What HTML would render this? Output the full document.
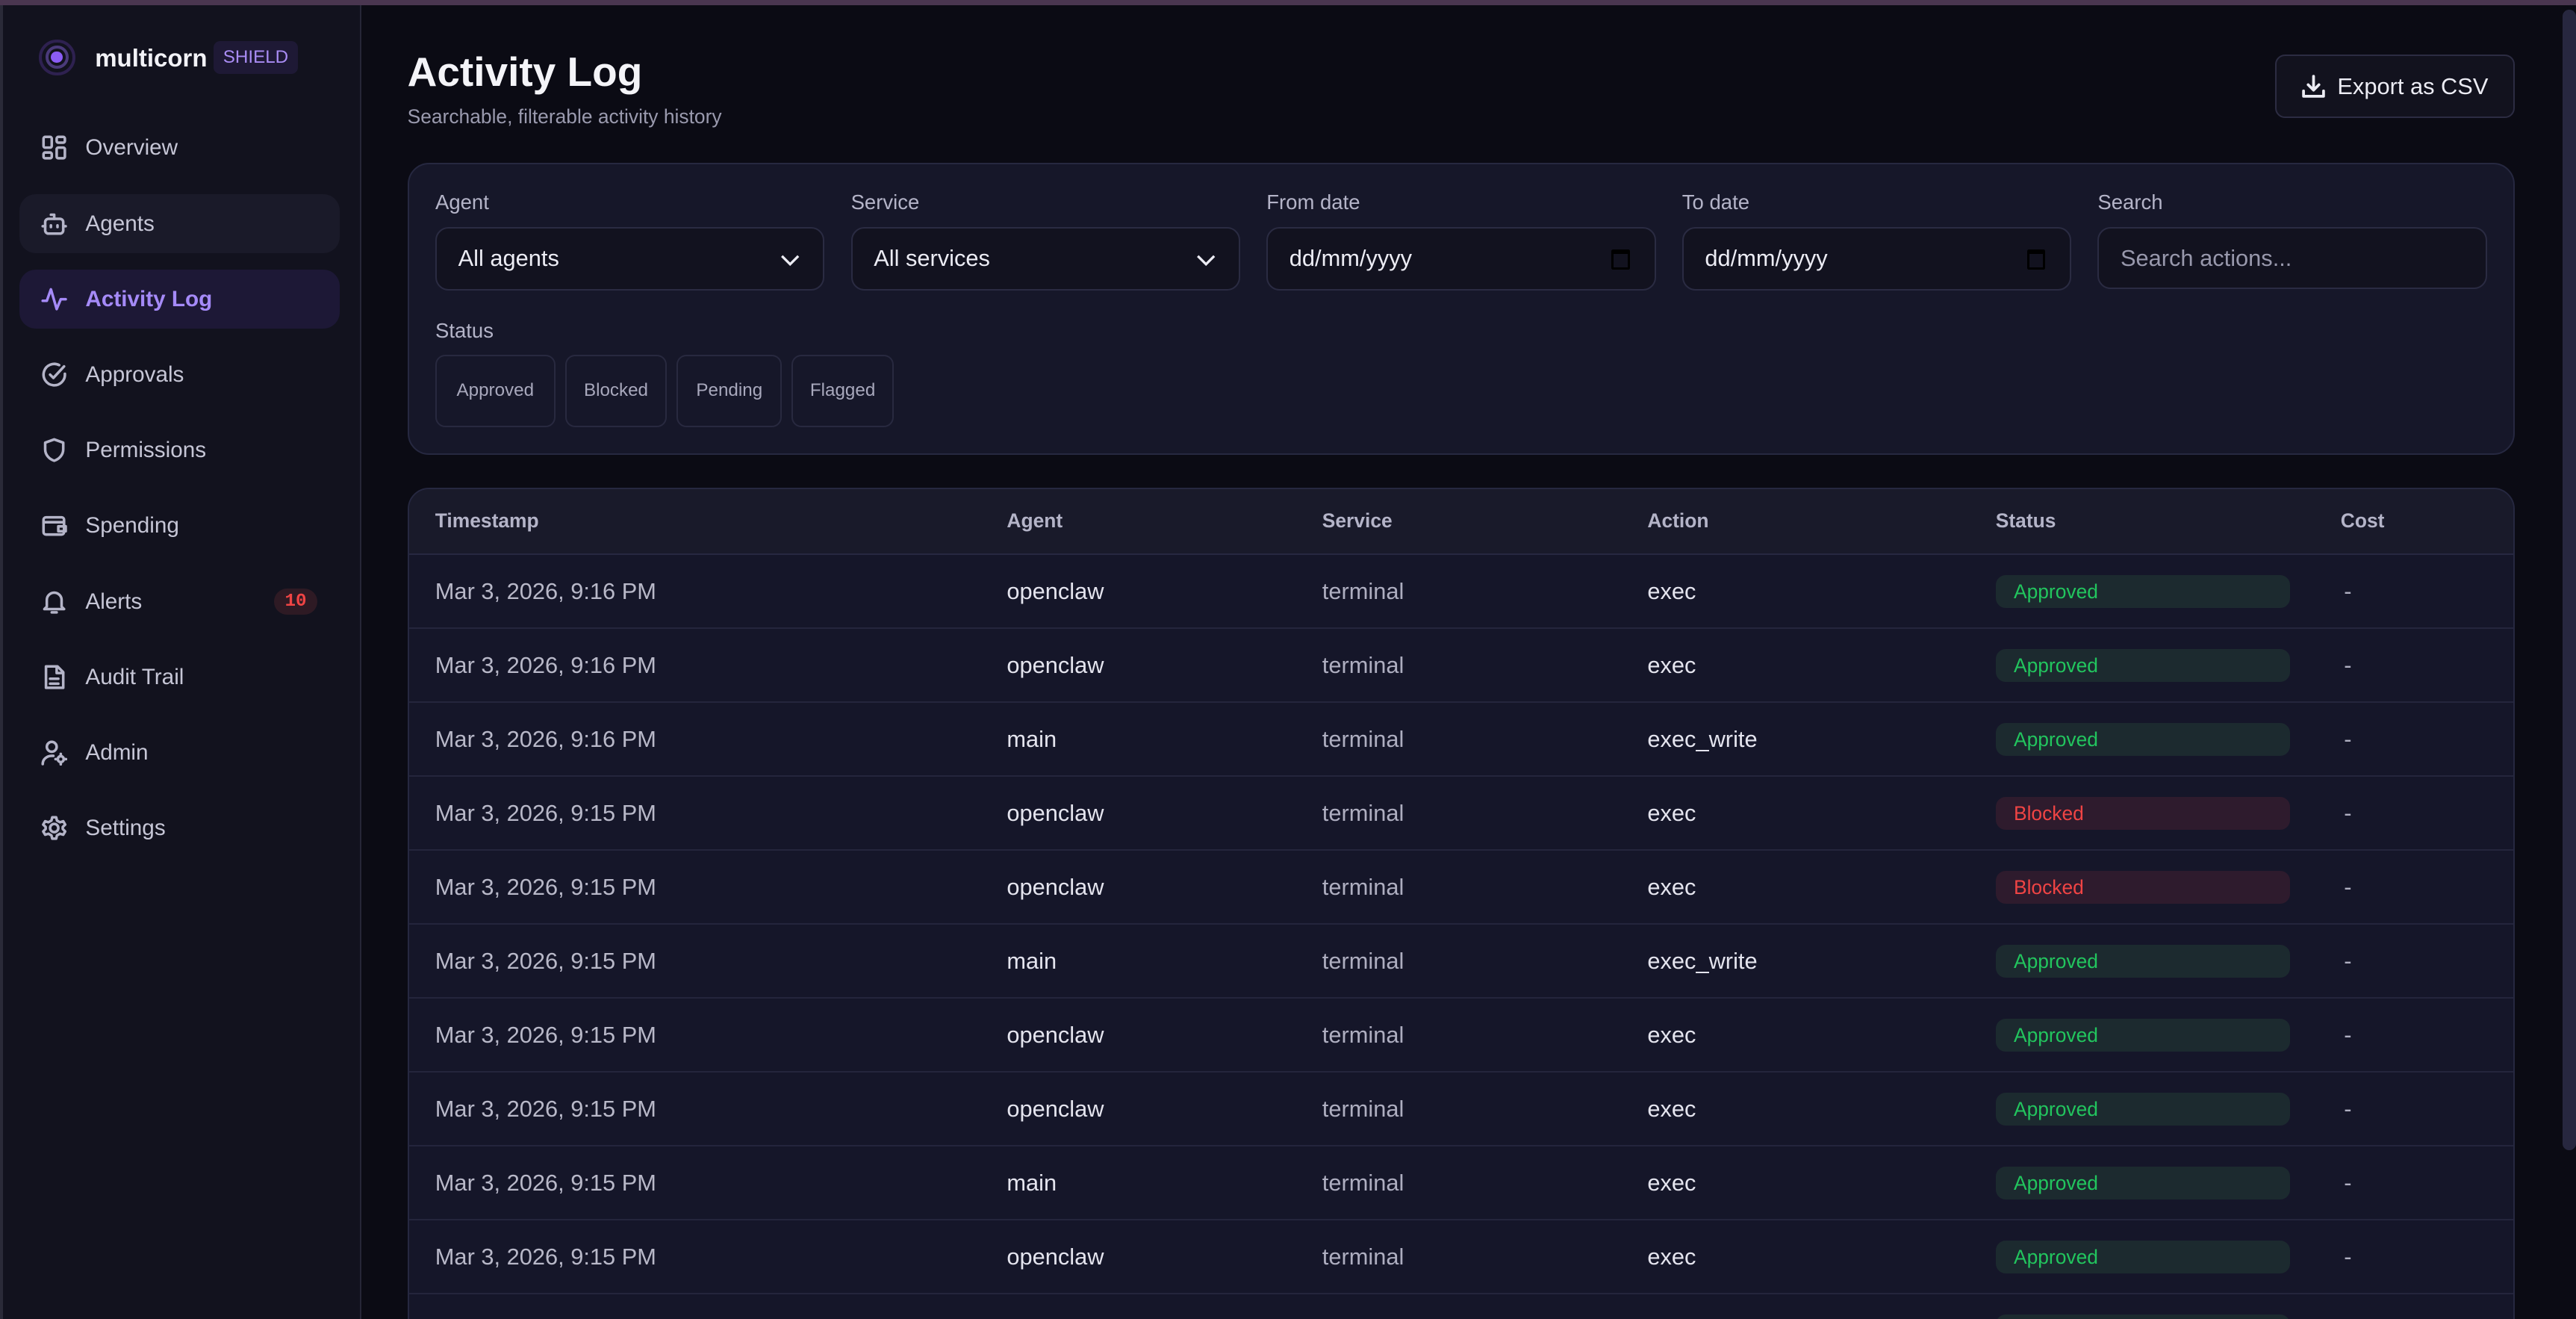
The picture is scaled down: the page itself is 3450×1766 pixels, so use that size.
<!DOCTYPE html>
<html><head><meta charset="utf-8"><style>
*{box-sizing:border-box;margin:0;padding:0}
html,body{width:3450px;height:1766px;overflow:hidden;background:#0b0b14}
#w{zoom:2.2;width:1568px;height:803px;position:relative;font-family:"Liberation Sans",sans-serif;background:#0b0b14;color:#e4e4ee;overflow:hidden}
.top{position:absolute;left:0;top:0;width:1568px;height:3px;background:#4a3650}
.side{position:absolute;left:0;top:3px;width:220px;height:800px;background:#12121e;border-right:1px solid #262637;border-left:2px solid #2a2a38}
.logo{position:absolute;left:22px;top:24px;width:22px;height:22px;border-radius:50%;border:2px solid #2e2150;background:#12121e}
.logo:before{content:"";position:absolute;left:2px;top:2px;width:14px;height:14px;border-radius:50%;border:2px solid #4a3a7a;box-sizing:border-box}
.logo:after{content:"";position:absolute;left:5.5px;top:5.5px;width:7px;height:7px;border-radius:50%;background:#8b5cf6}
.brand{position:absolute;left:56px;top:27px;font-size:15px;font-weight:bold;color:#f2f2f7}
.shield{position:absolute;left:128px;top:25px;height:20px;padding:0 6px;line-height:20px;font-size:11px;color:#a98cf4;background:#1e1935;border-radius:4px}
.nav{position:absolute;left:12px;width:195px;height:36px;border-radius:10px;font-size:13.5px;color:#c6c6d6;line-height:36px;padding-left:40px}
.nav svg{position:absolute;left:13px;top:10px;width:16px;height:16px;fill:none;stroke:#b4b4c8;stroke-width:1.6;stroke-linecap:round;stroke-linejoin:round}
.nav.ag{background:#1a1a29}
.nav.act{background:#1d1836;color:#a58af8;font-weight:bold}
.nav.act svg{stroke:#a58af8}
.badge{position:absolute;right:14px;top:10px;height:16px;width:26px;border-radius:8px;background:#2e1a24;color:#ef4444;font:bold 11px "Liberation Mono",monospace;line-height:16px;text-align:center}
h1{position:absolute;left:248px;top:29px;font-size:25px;font-weight:bold;color:#f4f4f8}
.sub{position:absolute;left:248px;top:64px;font-size:12px;color:#9a9aae}
.exp{position:absolute;left:1385px;top:33px;width:146px;height:39px;border:1px solid #2c2c42;border-radius:6px;background:#12121e;font-size:14px;color:#ececf4;line-height:37px;padding-left:37px}
.exp svg{position:absolute;left:15px;top:11px;width:15px;height:15px;fill:none;stroke:#ececf4;stroke-width:1.8;stroke-linecap:round;stroke-linejoin:round}
.card{position:absolute;left:248px;top:99px;width:1283px;height:178px;background:#161729;border:1px solid #262840;border-radius:13px}
.lbl{position:absolute;top:116px;font-size:12.5px;color:#b4b4c8}
.inp{position:absolute;top:138px;width:237px;height:39px;background:#12121f;border:1px solid #2a2b42;border-radius:8px;font-size:14px;color:#ececf4;line-height:36px;padding-left:13px}
.inp svg{position:absolute;right:14px;top:13px;width:12px;height:12px;fill:none;stroke:#ececf4;stroke-width:1.5}
.cal{position:absolute;right:15px;top:13px;width:11px;height:12px;border:1.5px solid #000;border-top-width:3px;border-radius:1px}
.chip{position:absolute;top:216px;height:44px;border:1px solid #28293f;border-radius:6px;font-size:11px;color:#a8a8bc;line-height:42px;text-align:center}
.tbl{position:absolute;left:248px;top:297px;width:1283px;height:520px;background:#151629;border:1px solid #262840;border-radius:13px;overflow:hidden}
.th{position:absolute;left:0;top:0;width:100%;height:40px;background:#191a2a;border-bottom:1px solid #272841}
.th span{position:absolute;top:12px;font-size:12px;font-weight:bold;color:#b4b4c8}
.row{position:absolute;left:0;width:100%;height:45px;border-bottom:1px solid #24253c}
.row span{position:absolute;top:14px;font-size:14px;color:#e4e4ee}
.row .ts{color:#b8b8c8}
.row .c{color:#aeaec0}
.st{position:absolute;left:966px;top:12px;width:179px;height:20px;border-radius:6px;font-size:12px;line-height:20px;padding-left:11px}
.ok{background:#1c2a2f;color:#22c55e}
.bl{background:#2e1b2d;color:#ef4444}
.sb{position:absolute;left:1558px;top:3px;width:10px;height:800px;background:#0b0b14}
.sb div{position:absolute;left:2px;top:3px;width:8px;height:694px;background:#27273f;border-radius:4px}
</style></head><body><div id="w">
<div class="top"></div>
<div class="side">
<div class="logo" style="top:21px"></div><div class="brand" style="top:24px">multicorn</div><div class="shield" style="top:22px">SHIELD</div>
</div>
<div class="nav" style="top:72px"><svg viewBox="0 0 16 16"><rect x="1.5" y="1.5" width="5" height="6.5" rx="1"/><rect x="9.5" y="1.5" width="5" height="3.5" rx="1"/><rect x="1.5" y="11" width="5" height="3.5" rx="1"/><rect x="9.5" y="8" width="5" height="6.5" rx="1"/></svg>Overview</div>
<div class="nav ag" style="top:118px"><svg viewBox="0 0 16 16"><rect x="2.5" y="5" width="11" height="9" rx="2"/><path d="M8 5V2.5H6M1 9.5h1.5M13.5 9.5H15M6 9v1M10 9v1"/></svg>Agents</div>
<div class="nav act" style="top:164px"><svg viewBox="0 0 16 16"><path d="M1 9h2.5L6 2l3.5 12L12 8h3"/></svg>Activity Log</div>
<div class="nav" style="top:210px"><svg viewBox="0 0 16 16"><path d="M14.5 7.5A6.5 6.5 0 1 1 11 2.2"/><path d="M5.5 8l2 2L14 3"/></svg>Approvals</div>
<div class="nav" style="top:256px"><svg viewBox="0 0 16 16"><path d="M8 1.5l5.5 2v4c0 3.5-2.5 6-5.5 7-3-1-5.5-3.5-5.5-7v-4z"/></svg>Permissions</div>
<div class="nav" style="top:302px"><svg viewBox="0 0 16 16"><rect x="1.5" y="3" width="12.5" height="10.5" rx="1.5"/><path d="M1.5 6h12.5M10.5 8.5h4.5v3h-4.5z"/></svg>Spending</div>
<div class="nav" style="top:348px"><svg viewBox="0 0 16 16"><path d="M3.5 11V7a4.5 4.5 0 0 1 9 0v4l1.5 1.5H2z"/><path d="M6.5 14.5h3"/></svg>Alerts<span class="badge">10</span></div>
<div class="nav" style="top:394px"><svg viewBox="0 0 16 16"><path d="M3 1.5h7l3.5 3.5v9.5H3z"/><path d="M9.5 1.5v4h4M5.5 9h5M5.5 12h5"/></svg>Audit Trail</div>
<div class="nav" style="top:440px"><svg viewBox="0 0 16 16"><circle cx="6.5" cy="4.5" r="3"/><path d="M1 15c0-3 2.5-5 5.5-5h1"/><circle cx="12" cy="12" r="1.8"/><path d="M12 8.8v1.4M12 13.8v1.4M8.8 12h1.4M13.8 12h1.4"/></svg>Admin</div>
<div class="nav" style="top:486px"><svg viewBox="0 0 16 16"><circle cx="8" cy="8" r="2.5"/><path d="M6.8 1.5h2.4l.5 2 1.8 1 2-.6 1.2 2-1.5 1.5v1.2l1.5 1.5-1.2 2-2-.6-1.8 1-.5 2H6.8l-.5-2-1.8-1-2 .6-1.2-2 1.5-1.5V7.4L1.3 5.9l1.2-2 2 .6 1.8-1z"/></svg>Settings</div>

<h1>Activity Log</h1>
<div class="sub">Searchable, filterable activity history</div>
<div class="exp"><svg viewBox="0 0 16 16"><path d="M8 1.5v9M4.5 7l3.5 3.5L11.5 7M1.5 11v3.5h13V11"/></svg>Export as CSV</div>

<div class="card"></div>
<div class="lbl" style="left:265px">Agent</div>
<div class="lbl" style="left:518px">Service</div>
<div class="lbl" style="left:771px">From date</div>
<div class="lbl" style="left:1024px">To date</div>
<div class="lbl" style="left:1277px">Search</div>
<div class="inp" style="left:265px">All agents<svg viewBox="0 0 12 12"><path d="M1 4l5 5 5-5"/></svg></div>
<div class="inp" style="left:518px">All services<svg viewBox="0 0 12 12"><path d="M1 4l5 5 5-5"/></svg></div>
<div class="inp" style="left:771px">dd/mm/yyyy<div class="cal"></div></div>
<div class="inp" style="left:1024px">dd/mm/yyyy<div class="cal"></div></div>
<div class="inp" style="left:1277px;top:138px;height:38px;color:#9898ac">Search actions...</div>
<div class="lbl" style="left:265px;top:194px">Status</div>
<div class="chip" style="left:265px;width:73px">Approved</div>
<div class="chip" style="left:344px;width:62px">Blocked</div>
<div class="chip" style="left:412px;width:64px">Pending</div>
<div class="chip" style="left:482px;width:62px">Flagged</div>

<div class="tbl">
<div class="th"><span style="left:16px">Timestamp</span><span style="left:364px">Agent</span><span style="left:556px">Service</span><span style="left:754px">Action</span><span style="left:966px">Status</span><span style="left:1176px">Cost</span></div>
<div class="row" style="top:40px"><span class="ts" style="left:16px">Mar 3, 2026, 9:16 PM</span><span style="left:364px">openclaw</span><span class="c" style="left:556px">terminal</span><span style="left:754px">exec</span><div class="st ok">Approved</div><span class="c" style="left:1178px">-</span></div>
<div class="row" style="top:85px"><span class="ts" style="left:16px">Mar 3, 2026, 9:16 PM</span><span style="left:364px">openclaw</span><span class="c" style="left:556px">terminal</span><span style="left:754px">exec</span><div class="st ok">Approved</div><span class="c" style="left:1178px">-</span></div>
<div class="row" style="top:130px"><span class="ts" style="left:16px">Mar 3, 2026, 9:16 PM</span><span style="left:364px">main</span><span class="c" style="left:556px">terminal</span><span style="left:754px">exec_write</span><div class="st ok">Approved</div><span class="c" style="left:1178px">-</span></div>
<div class="row" style="top:175px"><span class="ts" style="left:16px">Mar 3, 2026, 9:15 PM</span><span style="left:364px">openclaw</span><span class="c" style="left:556px">terminal</span><span style="left:754px">exec</span><div class="st bl">Blocked</div><span class="c" style="left:1178px">-</span></div>
<div class="row" style="top:220px"><span class="ts" style="left:16px">Mar 3, 2026, 9:15 PM</span><span style="left:364px">openclaw</span><span class="c" style="left:556px">terminal</span><span style="left:754px">exec</span><div class="st bl">Blocked</div><span class="c" style="left:1178px">-</span></div>
<div class="row" style="top:265px"><span class="ts" style="left:16px">Mar 3, 2026, 9:15 PM</span><span style="left:364px">main</span><span class="c" style="left:556px">terminal</span><span style="left:754px">exec_write</span><div class="st ok">Approved</div><span class="c" style="left:1178px">-</span></div>
<div class="row" style="top:310px"><span class="ts" style="left:16px">Mar 3, 2026, 9:15 PM</span><span style="left:364px">openclaw</span><span class="c" style="left:556px">terminal</span><span style="left:754px">exec</span><div class="st ok">Approved</div><span class="c" style="left:1178px">-</span></div>
<div class="row" style="top:355px"><span class="ts" style="left:16px">Mar 3, 2026, 9:15 PM</span><span style="left:364px">openclaw</span><span class="c" style="left:556px">terminal</span><span style="left:754px">exec</span><div class="st ok">Approved</div><span class="c" style="left:1178px">-</span></div>
<div class="row" style="top:400px"><span class="ts" style="left:16px">Mar 3, 2026, 9:15 PM</span><span style="left:364px">main</span><span class="c" style="left:556px">terminal</span><span style="left:754px">exec</span><div class="st ok">Approved</div><span class="c" style="left:1178px">-</span></div>
<div class="row" style="top:445px"><span class="ts" style="left:16px">Mar 3, 2026, 9:15 PM</span><span style="left:364px">openclaw</span><span class="c" style="left:556px">terminal</span><span style="left:754px">exec</span><div class="st ok">Approved</div><span class="c" style="left:1178px">-</span></div>
<div class="row" style="top:490px"><div class="st ok"></div></div>
</div>
<div class="sb"><div></div></div>
</div></body></html>
